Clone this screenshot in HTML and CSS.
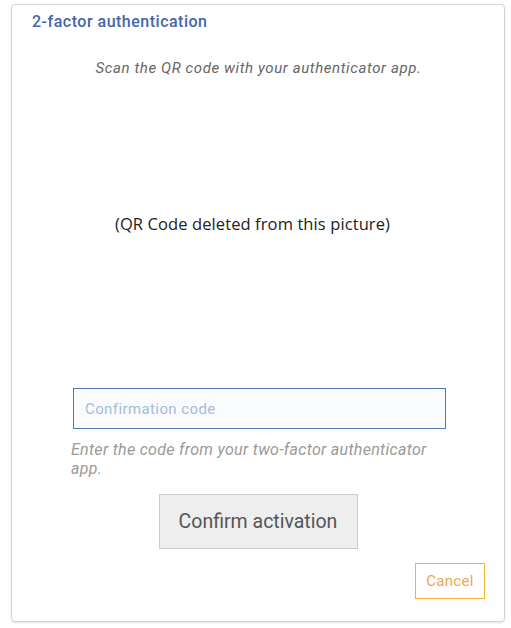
FILE: index.html
```html
<!DOCTYPE html>
<html>
<head>
<meta charset="utf-8">
<link rel="stylesheet" href="styles.css">
</head>
<body>
<div class="card">
  <h1 class="title">2-factor authentication</h1>
  <p class="scan">Scan the QR code with your authenticator app.</p>
  <div class="qr">(QR Code deleted from this picture)</div>
  <div class="field">
    <input class="code" type="text" placeholder="Confirmation code">
    <p class="help">Enter the code from your two-factor authenticator app.</p>
  </div>
  <div class="actions">
    <button class="confirm">Confirm activation</button>
  </div>
  <div class="footer">
    <button class="cancel">Cancel</button>
  </div>
</div>
</body>
</html>
```
FILE: styles.css
```css
html, body {
  margin: 0;
  padding: 0;
  background: #ffffff;
}
body {
  font-family: Roboto, "Liberation Sans", sans-serif;
  padding: 4px 6px 6px 11px;
}
.card {
  box-sizing: border-box;
  width: 494px;
  height: 618px;
  border: 1px solid #d4d4d4;
  border-radius: 4px;
  box-shadow: 0 1px 2px rgba(0,0,0,0.12);
  padding: 6px 19px 0 20px;
  display: flex;
  flex-direction: column;
}
.title {
  margin: 0;
  font-size: 16px;
  letter-spacing: 0.5px;
  font-weight: 500;
  color: #4565a8;
  line-height: 22px;
}
.scan {
  margin: 26px 0 0;
  text-align: center;
  font-size: 15px;
  letter-spacing: 0.6px;
  font-style: italic;
  color: #666;
  line-height: 18px;
}
.qr {
  height: 311px;
  display: flex;
  align-items: center;
  justify-content: center;
  font-family: "Open Sans", "Noto Sans", sans-serif;
  font-size: 16.5px;
  letter-spacing: 0.1px;
  color: #222;
  padding: 0 12px 18px 0;
  box-sizing: border-box;
}
.field {
  padding-left: 39px;
  width: 376px;
}
.code {
  box-sizing: border-box;
  display: block;
  margin-left: 2px;
  width: 373px;
  height: 41px;
  border: 1px solid #5277b5;
  background: #fafbfc;
  padding: 0 11px;
  font-family: Roboto, "Liberation Sans", sans-serif;
  font-size: 15px;
  letter-spacing: 0.4px;
  color: #333;
  outline: none;
}
.code::placeholder {
  color: #a9badb;
}
.help {
  margin: 11px 0 0;
  font-size: 16px;
  letter-spacing: 0.3px;
  font-style: italic;
  color: #9a9a9a;
  line-height: 19px;
}
.actions {
  display: flex;
  justify-content: center;
  margin-top: 16px;
  padding-right: 1px;
}
.confirm {
  width: 199px;
  height: 55px;
  background: #eeeeee;
  border: 1px solid #cccccc;
  border-radius: 0;
  font-family: Roboto, "Liberation Sans", sans-serif;
  font-size: 19.5px;
  color: #555;
  padding: 0;
}
.footer {
  display: flex;
  justify-content: flex-end;
  margin-top: 14px;
}
.cancel {
  width: 70px;
  height: 36px;
  background: #fff;
  border: 1px solid #f0b535;
  border-radius: 0;
  font-family: Roboto, "Liberation Sans", sans-serif;
  font-size: 15px;
  letter-spacing: 0.3px;
  color: #eca84c;
  padding: 0;
}
```
